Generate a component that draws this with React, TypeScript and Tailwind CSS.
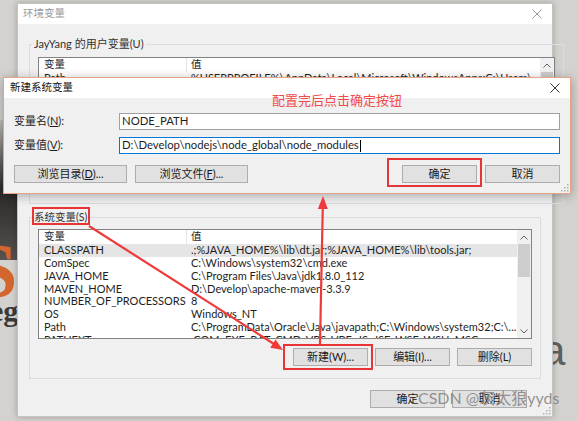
import React from "react"

const userRows: [string, string][] = [
  ["Path", "%USERPROFILE%\\AppData\\Local\\Microsoft\\WindowsApps;C:\\Users\\..."],
  ["TEMP", "%USERPROFILE%\\AppData\\Local\\Temp"],
  ["TMP", "%USERPROFILE%\\AppData\\Local\\Temp"],
]

const sysRows: [string, string][] = [
  ["CLASSPATH", ".;%JAVA_HOME%\\lib\\dt.jar;%JAVA_HOME%\\lib\\tools.jar;"],
  ["ComSpec", "C:\\Windows\\system32\\cmd.exe"],
  ["JAVA_HOME", "C:\\Program Files\\Java\\jdk1.8.0_112"],
  ["MAVEN_HOME", "D:\\Develop\\apache-maven-3.3.9"],
  ["NUMBER_OF_PROCESSORS", "8"],
  ["OS", "Windows_NT"],
  ["Path", "C:\\ProgramData\\Oracle\\Java\\javapath;C:\\Windows\\system32;C:\\..."],
  ["PATHEXT", ".COM;.EXE;.BAT;.CMD;.VBS;.VBE;.JS;.JSE;.WSF;.WSH;.MSC"],
]

function Btn({ children, className = "" }: { children: React.ReactNode; className?: string }) {
  return (
    <div
      className={
        "flex h-[18px] w-[75px] items-center justify-center border border-[#adadad] bg-[#e1e1e1] text-[11px] text-[#1a1a1a] " +
        className
      }
    >
      {children}
    </div>
  )
}

function Chevron({ up }: { up?: boolean }) {
  return (
    <svg width="8" height="5" viewBox="0 0 8 5" className="text-[#606060]">
      <path d={up ? "M0.5 4.5 L4 1 L7.5 4.5" : "M0.5 0.5 L4 4 L7.5 0.5"} fill="none" stroke="currentColor" strokeWidth="1" />
    </svg>
  )
}

function VarTable({
  rows,
  className = "",
  selected = -1,
}: {
  rows: [string, string][]
  className?: string
  selected?: number
}) {
  return (
    <div className={"flex overflow-hidden border border-[#828282] bg-white text-[11px] text-[#1e1e1e] " + className}>
      <div className="min-w-0 flex-1">
        <div className="flex h-[14px] items-center text-[10.5px]">
          <div className="flex h-full w-[148px] items-center border-r border-[#e5e5e5] pl-[5px]">变量</div>
          <div className="pl-[4px]">值</div>
        </div>
        {rows.map(([k, v], i) => (
          <div
            key={k + i}
            className={"flex h-[12.8px] items-center whitespace-nowrap " + (i === selected ? "bg-[#e5e5e5]" : "")}
          >
            <div className="w-[148px] shrink-0 pl-[5px]">{k}</div>
            <div className="pl-[4px]">{v}</div>
          </div>
        ))}
      </div>
      <div className="flex w-[14px] flex-col items-center bg-[#f0f0f0]">
        <div className="flex h-[14px] items-center">
          <Chevron up />
        </div>
        <div className="h-[33px] w-[12px] bg-[#cdcdcd]" />
        <div className="flex-1" />
        <div className="flex h-[13px] items-center">
          <Chevron />
        </div>
      </div>
    </div>
  )
}

function Grip() {
  return (
    <svg width="8" height="8" viewBox="0 0 8 8" className="absolute bottom-[1px] right-[1px]">
      <rect x="6" y="0" width="1.5" height="1.5" fill="#b0b0b0" />
      <rect x="3" y="3" width="1.5" height="1.5" fill="#b0b0b0" />
      <rect x="6" y="3" width="1.5" height="1.5" fill="#b0b0b0" />
      <rect x="0" y="6" width="1.5" height="1.5" fill="#b0b0b0" />
      <rect x="3" y="6" width="1.5" height="1.5" fill="#b0b0b0" />
      <rect x="6" y="6" width="1.5" height="1.5" fill="#b0b0b0" />
    </svg>
  )
}

function CloseX({ color }: { color: string }) {
  return (
    <svg width="10" height="10" viewBox="0 0 10 10">
      <path d="M0.5 0.5 L9.5 9.5 M9.5 0.5 L0.5 9.5" stroke={color} strokeWidth="1" />
    </svg>
  )
}

export default function App() {
  return (
    <div className="relative h-[421px] w-[578px] overflow-hidden bg-[#d4d2ce] font-['Lato','Noto_Sans_CJK_SC',sans-serif]">
      {/* wallpaper bits */}
      <div className="absolute left-0 top-[120px] h-[140px] w-[20px] bg-gradient-to-b from-[#c4c0bb] via-[#2c2a28] to-[#55524f]" />
      <div className="absolute left-[-26px] top-[232px] font-['Liberation_Serif',serif] text-[78px] font-bold leading-none text-[#d2662e]">
        S
      </div>
      <div className="absolute left-[-10px] top-[296px] font-['Liberation_Serif',serif] text-[30px] font-bold leading-none text-[#3a3a3a]">
        eg
      </div>
      <div className="absolute left-[542px] top-[330px] font-['Liberation_Sans',sans-serif] text-[42px] leading-none text-[#5f5f5f]">
        a
      </div>

      {/* outer window */}
      <div className="relative ml-[17px] mt-[3px] flex h-[414px] w-[536px] flex-col border border-[#c4c4c4] bg-[#f0f0f0] shadow-[0_0_6px_rgba(0,0,0,0.25)]">
        <div className="flex h-[20px] items-center justify-between bg-white pl-[5px] pr-[10px] text-[10.5px] text-[#9a9a9a]">
          <span>环境变量</span>
          <CloseX color="#9a9a9a" />
        </div>
        <div className="flex flex-1 flex-col px-[11px] pt-[12px] text-[11px] text-[#1e1e1e]">
          <fieldset className="border border-[#dcdcdc] px-[8px] pb-[10px]">
            <legend className="ml-[-6px] px-[2px] text-[11px] leading-[16px] text-[#333]">JayYang 的用户变量(U)</legend>
            <VarTable rows={userRows} className="mt-[5px] h-[111px]" />
            <div className="mt-[7px] flex justify-end gap-[7px]">
              <Btn>新建(N)...</Btn>
              <Btn>编辑(E)...</Btn>
              <Btn>删除(D)</Btn>
            </div>
          </fieldset>
          <fieldset className="mt-[5px] border border-[#dcdcdc] px-[8px] pb-[12px]">
            <legend className="ml-[-6px] px-[2px] text-[10.5px] leading-[16px] text-[#333]">系统变量(S)</legend>
            <VarTable rows={sysRows} selected={0} className="mt-[4px] h-[110px]" />
            <div className="mt-[9px] flex justify-end gap-[7px]">
              <Btn>新建(W)...</Btn>
              <Btn>编辑(I)...</Btn>
              <Btn>删除(L)</Btn>
            </div>
          </fieldset>
          <div className="mt-[11px] flex justify-end gap-[7px] pr-[14px]">
            <Btn>确定</Btn>
            <Btn>取消</Btn>
          </div>
        </div>
        <Grip />
      </div>

      {/* new system variable dialog */}
      <div className="absolute left-[3px] top-[77px] flex h-[117px] w-[568px] flex-col border border-[#e3a487] bg-[#f0f0f0] shadow-[0_2px_10px_rgba(0,0,0,0.3)]">
        <div className="flex h-[20px] items-center justify-between bg-white pl-[6px] pr-[10px] text-[10.5px] text-[#111]">
          <span>新建系统变量</span>
          <CloseX color="#333" />
        </div>
        <div className="flex flex-col pl-[10px] pr-[10px] pt-[15px] text-[11px] text-[#1e1e1e]">
          <div className="flex h-[17px] items-center">
            <span className="w-[105px]">
              变量名(<u>N</u>):
            </span>
            <div className="flex h-full flex-1 items-center border border-[#a0a0a0] bg-white pl-[2px] text-[11.3px]">NODE_PATH</div>
          </div>
          <div className="mt-[7px] flex h-[17px] items-center">
            <span className="w-[105px]">
              变量值(<u>V</u>):
            </span>
            <div className="flex h-full flex-1 items-center border border-[#0078d7] bg-white pl-[2px] text-[11.3px]">
              D:\Develop\nodejs\node_global\node_modules
              <span className="ml-[1px] h-[12px] w-[1px] bg-black" />
            </div>
          </div>
          <div className="mt-[11px] flex h-[18px] items-center">
            <Btn className="w-[113px]">
              浏览目录(<u>D</u>)...
            </Btn>
            <Btn className="ml-[8px] w-[113px]">
              浏览文件(<u>F</u>)...
            </Btn>
            <div className="flex-1" />
            <Btn>确定</Btn>
            <Btn className="ml-[8px]">取消</Btn>
          </div>
        </div>
        <Grip />
      </div>

      {/* annotation */}
      <div className="absolute left-[272px] top-[92px] text-[13px] leading-[16px] text-[#f24b4b]">配置完后点击确定按钮</div>
      <svg className="pointer-events-none absolute inset-0" width="578" height="421">
        <rect x="33" y="208" width="56" height="16" fill="none" stroke="#e83434" strokeWidth="2" />
        <rect x="388" y="159" width="93" height="27" fill="none" stroke="#e83434" strokeWidth="2" />
        <rect x="284" y="345" width="88" height="24" fill="none" stroke="#e83434" strokeWidth="2" />
        <line x1="89" y1="226" x2="274" y2="344" stroke="#f03a3a" strokeWidth="2.2" />
        <polygon points="283,350 270.2,347.8 275.6,339.4" fill="#f03a3a" />
        <line x1="320" y1="344" x2="322.8" y2="206" stroke="#f03a3a" strokeWidth="2.2" />
        <polygon points="323,196 327.8,209 317.8,209" fill="#f03a3a" />
      </svg>
      <div className="absolute left-[418px] top-[389px] text-[16px] leading-[18px] text-[#7a7a7a]/80">CSDN @灰太狼yyds</div>
    </div>
  )
}
